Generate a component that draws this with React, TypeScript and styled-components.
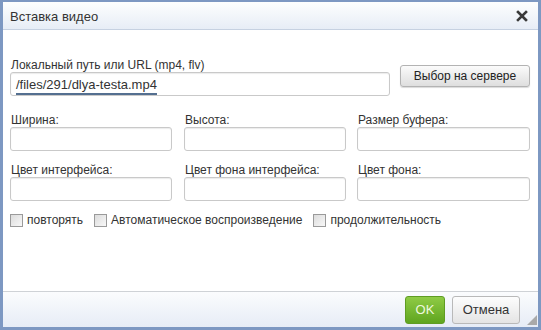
import React from "react";
import styled, { createGlobalStyle } from "styled-components";

const Global = createGlobalStyle`
  html, body { margin: 0; padding: 0; background: #fff; }
  body { font-family: "Liberation Sans", Arial, sans-serif; }
  * { box-sizing: border-box; }
`;

const Dialog = styled.div`
  position: relative;
  width: 541px;
  height: 330px;
  display: flex;
  flex-direction: column;
  border-style: solid;
  border-color: #7d98c2;
  border-width: 2px 3px 3px 3px;
  background: #fff;
`;

const TitleBar = styled.div`
  height: 28px;
  flex: none;
  display: flex;
  align-items: center;
  justify-content: space-between;
  padding: 0 10px 0 7px;
  background: linear-gradient(#fdfefe, #e7edf6);
  border-bottom: 1px solid #c6d1e1;
`;

const Title = styled.span`
  font-size: 13px;
  color: #333;
  padding-top: 2px;
`;

const CloseButton = styled.button`
  width: 12px;
  height: 12px;
  padding: 0;
  border: 0;
  background: none;
  display: flex;
  margin-top: 1px;
`;

const Body = styled.div`
  flex: 1;
  padding: 28px 0 0 7px;
  display: flex;
  flex-direction: column;
`;

const UrlRow = styled.div`
  display: flex;
  align-items: flex-start;
`;

const Field = styled.label<{ $w: number }>`
  display: flex;
  flex-direction: column;
  width: ${(p) => p.$w}px;
`;

const LabelText = styled.span`
  font-size: 12px;
  line-height: 14px;
  color: #333;
  height: 14px;
  margin-left: 1px;
  white-space: nowrap;
`;

const TextBox = styled.div<{ $w: number }>`
  width: ${(p) => p.$w}px;
  height: 24px;
  border: 1px solid #c9c9c9;
  border-radius: 3px;
  background: #fff;
  box-shadow: inset 0 1px 1px rgba(0, 0, 0, 0.08);
  font-size: 13px;
  color: #333;
  display: flex;
  align-items: center;
  padding-left: 5px;
`;

const ValueText = styled.span`
  border-bottom: 2px solid #546f90;
  line-height: 14px;
  margin-top: 4px;
  padding-bottom: 1px;
`;

const ServerButton = styled.button`
  margin: 7px 0 0 10px;
  width: 130px;
  height: 22px;
  border: 1px solid #b3b3b3;
  border-radius: 3px;
  background: linear-gradient(#fbfbfb, #dedede);
  box-shadow: 0 1px 1px rgba(0, 0, 0, 0.15);
  font-family: "Liberation Sans", Arial, sans-serif;
  font-size: 12px;
  color: #222;
  padding: 0;
`;

const Grid = styled.div`
  display: grid;
  grid-template-columns: 174px 173px 173px;
  row-gap: 12px;
  margin-top: 17px;
`;

const CheckRow = styled.div`
  display: flex;
  align-items: center;
  margin: 12px 0 0 0;
`;

const CheckLabel = styled.label`
  display: flex;
  align-items: center;
  font-size: 12px;
  color: #333;
  margin-right: 11px;
`;

const Check = styled.input`
  appearance: none;
  width: 13px;
  height: 13px;
  margin: 0 4px 0 0;
  border: 1px solid #9a9a9a;
  background: linear-gradient(135deg, #dcdcdc, #f8f8f8);
  border-radius: 0;
`;

const Footer = styled.div`
  height: 36px;
  flex: none;
  border-top: 1px solid #cfd2d6;
  background: linear-gradient(#fbfcfd, #e6ecf6);
  display: flex;
  justify-content: flex-end;
  align-items: center;
  gap: 7px;
  padding-right: 18px;
`;

const FooterButton = styled.button<{ $primary?: boolean }>`
  height: 28px;
  width: ${(p) => (p.$primary ? 40 : 68)}px;
  border-radius: 3px;
  border: 1px solid ${(p) => (p.$primary ? "#5f9c23" : "#b9b9b9")};
  background: ${(p) =>
    p.$primary
      ? "linear-gradient(#8fcb45, #5fa51f)"
      : "linear-gradient(#fdfdfd, #e4e4e4)"};
  color: ${(p) => (p.$primary ? "#eef8df" : "#333")};
  font-family: "Liberation Sans", Arial, sans-serif;
  font-size: 13px;
  padding: 0;
`;

const Grip = styled.svg`
  position: absolute;
  right: 1px;
  bottom: 2px;
`;

const fields = [
  { label: "Ширина:", w: 162 },
  { label: "Высота:", w: 162 },
  { label: "Размер буфера:", w: 173 },
  { label: "Цвет интерфейса:", w: 162 },
  { label: "Цвет фона интерфейса:", w: 162 },
  { label: "Цвет фона:", w: 173 },
];

const checks = ["повторять", "Автоматическое воспроизведение", "продолжительность"];

export default function App() {
  return (
    <>
      <Global />
      <Dialog>
        <TitleBar>
          <Title>Вставка видео</Title>
          <CloseButton aria-label="close">
            <svg width="12" height="12" viewBox="0 0 12 12">
              <path d="M2 2 L10 10 M10 2 L2 10" stroke="#3a3a3a" strokeWidth="2.6" strokeLinecap="square" />
            </svg>
          </CloseButton>
        </TitleBar>
        <Body>
          <UrlRow>
            <Field $w={380}>
              <LabelText>Локальный путь или URL (mp4, flv)</LabelText>
              <TextBox $w={380}>
                <ValueText>/files/291/dlya-testa.mp4</ValueText>
              </TextBox>
            </Field>
            <ServerButton>Выбор на сервере</ServerButton>
          </UrlRow>
          <Grid>
            {fields.map((f) => (
              <Field key={f.label} $w={f.w}>
                <LabelText>{f.label}</LabelText>
                <TextBox $w={f.w} />
              </Field>
            ))}
          </Grid>
          <CheckRow>
            {checks.map((c) => (
              <CheckLabel key={c}>
                <Check type="checkbox" />
                {c}
              </CheckLabel>
            ))}
          </CheckRow>
        </Body>
        <Footer>
          <FooterButton $primary>OK</FooterButton>
          <FooterButton>Отмена</FooterButton>
        </Footer>
        <Grip width="10" height="10" viewBox="0 0 10 10">
          <path d="M10 0 L10 10 L0 10 Z" fill="#a9a9a9" />
        </Grip>
      </Dialog>
    </>
  );
}
